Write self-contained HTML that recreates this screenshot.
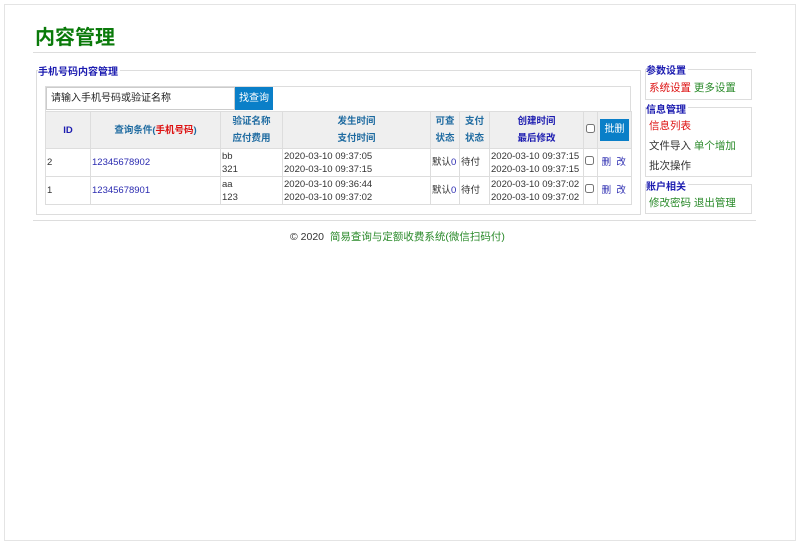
<!DOCTYPE html>
<html><head><meta charset="utf-8"><style>
*{margin:0;padding:0;box-sizing:border-box}
body{width:800px;height:545px;background:#fff;font-family:"Liberation Sans","Noto Sans CJK SC",sans-serif;font-size:10px;color:#333;position:relative;overflow:hidden}
.a{position:absolute}
.outer{left:4px;top:4px;width:792px;height:537px;border:1px solid #e4e4e4}
h1{position:absolute;left:35px;top:21px;font-size:20px;color:#0a7a0a;font-weight:bold;letter-spacing:0px}
.hl{height:1px;background:#ddd}
.leg{font-weight:bold;color:#1c1cb0;font-size:10px;background:#fff;padding-right:2px}
.box{border:1px solid #ddd}
table{border-collapse:collapse;position:absolute;left:45px;top:111px;width:586px;table-layout:fixed}
td{border:1px solid #ddd;font-size:9.5px;line-height:13px;padding:0 1px}
th{border:1px solid #ddd;background:#efefef;color:#1d6aa0;font-size:9.5px;font-weight:bold;line-height:17px;height:37px}
.bl{color:#2a2ab0}.r{color:#d11}.g{color:#2a8a2a}
.btn{background:#0a7fc8;color:#fff;font-size:10px;text-align:center}
.sb{font-size:10.5px;line-height:20px;padding-left:3px}
</style></head><body>
<div class="a outer"></div>
<h1>内容管理</h1>
<div class="a hl" style="left:33px;top:52px;width:723px"></div>
<div class="a box" style="left:36px;top:70px;width:605px;height:145px"></div>
<div class="a leg" style="left:38px;top:63px">手机号码内容管理</div>
<div class="a box" style="left:45px;top:86px;width:586px;height:25px;border-bottom:none"></div>
<div class="a" style="left:46px;top:87px;width:189px;height:23px;border:1px solid #ccc;background:#fff;font-size:10px;line-height:21px;padding-left:4px;color:#222">请输入手机号码或验证名称</div>
<div class="a btn" style="left:235px;top:87px;width:38px;height:23px;line-height:23px">找查询</div>
<table>
<colgroup><col style="width:45px"><col style="width:130px"><col style="width:62px"><col style="width:148px"><col style="width:29px"><col style="width:30px"><col style="width:94px"><col style="width:14px"><col style="width:34px"></colgroup>
<tr><th style="color:#1c1cb0">ID</th><th>查询条件(<span class="r">手机号码</span>)</th><th>验证名称<br>应付费用</th><th>发生时间<br>支付时间</th><th>可查<br>状态</th><th>支付<br>状态</th><th style="color:#1c1cb0">创建时间<br>最后修改</th><th><input type="checkbox" style="width:9px;height:9px"></th><th style="padding:0 2px"><div class="btn" style="height:22px;line-height:22px;font-weight:normal">批删</div></th></tr>
<tr style="height:28px"><td>2</td><td class="bl">12345678902</td><td>bb<br>321</td><td>2020-03-10 09:37:05<br>2020-03-10 09:37:15</td><td>默认<span class="bl">0</span></td><td>待付</td><td>2020-03-10 09:37:15<br>2020-03-10 09:37:15</td><td><input type="checkbox" style="width:9px;height:9px"></td><td class="bl">&nbsp;删&nbsp;&nbsp;改</td></tr>
<tr style="height:28px"><td>1</td><td class="bl">12345678901</td><td>aa<br>123</td><td>2020-03-10 09:36:44<br>2020-03-10 09:37:02</td><td>默认<span class="bl">0</span></td><td>待付</td><td>2020-03-10 09:37:02<br>2020-03-10 09:37:02</td><td><input type="checkbox" style="width:9px;height:9px"></td><td class="bl">&nbsp;删&nbsp;&nbsp;改</td></tr>
</table>
<div class="a box" style="left:645px;top:69px;width:107px;height:31px"></div>
<div class="a leg" style="left:646px;top:62px">参数设置</div>
<div class="a sb" style="left:646px;top:78px"><span class="r">系统设置</span> <span class="g">更多设置</span></div>
<div class="a box" style="left:645px;top:107px;width:107px;height:70px"></div>
<div class="a leg" style="left:646px;top:101px">信息管理</div>
<div class="a sb" style="left:646px;top:116px"><span class="r">信息列表</span><br>文件导入 <span class="g">单个增加</span><br>批次操作</div>
<div class="a box" style="left:645px;top:184px;width:107px;height:30px"></div>
<div class="a leg" style="left:646px;top:178px">账户相关</div>
<div class="a sb" style="left:646px;top:193px"><span class="g">修改密码 退出管理</span></div>
<div class="a hl" style="left:33px;top:220px;width:723px"></div>
<div class="a" style="left:290px;top:229px;font-size:10.5px;color:#333">© 2020 &nbsp;<span class="g">简易查询与定额收费系统(微信扫码付)</span></div>
</body></html>
